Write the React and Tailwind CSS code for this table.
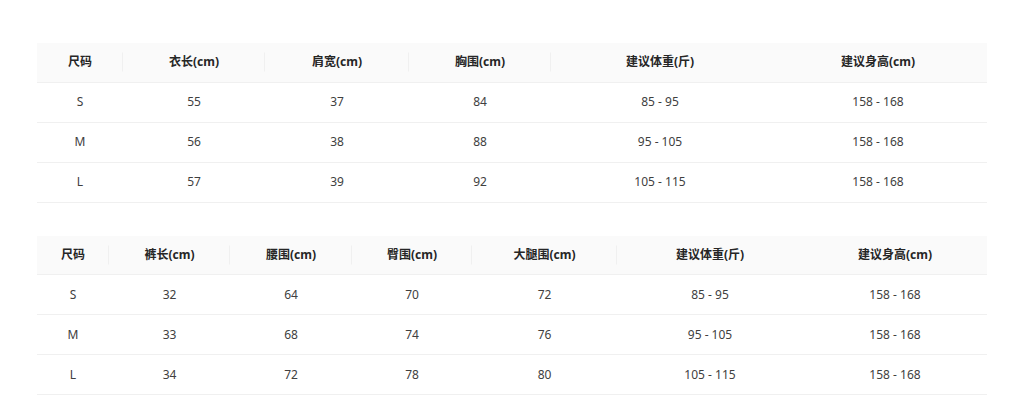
import React from 'react'

const tops = {
  widths: [86, 142, 144, 142, 218, 218],
  head: ['尺码', '衣长(cm)', '肩宽(cm)', '胸围(cm)', '建议体重(斤)', '建议身高(cm)'],
  rows: [
    ['S', '55', '37', '84', '85 - 95', '158 - 168'],
    ['M', '56', '38', '88', '95 - 105', '158 - 168'],
    ['L', '57', '39', '92', '105 - 115', '158 - 168'],
  ],
}

const pants = {
  widths: [72, 121, 122, 120, 145, 186, 184],
  head: ['尺码', '裤长(cm)', '腰围(cm)', '臀围(cm)', '大腿围(cm)', '建议体重(斤)', '建议身高(cm)'],
  rows: [
    ['S', '32', '64', '70', '72', '85 - 95', '158 - 168'],
    ['M', '33', '68', '74', '76', '95 - 105', '158 - 168'],
    ['L', '34', '72', '78', '80', '105 - 115', '158 - 168'],
  ],
}

export default function App() {
  return (
    <div
      className="bg-white w-[1024px] h-[405px] overflow-hidden pt-[43px] text-[12px]"
      style={{ fontFamily: '"Noto Sans", "Noto Sans CJK SC", sans-serif' }}
    >
      <div className="w-[950px] mx-auto flex flex-col gap-[33px]">
        <SizeTable data={tops} />
        <SizeTable data={pants} />
      </div>
    </div>
  )
}

function SizeTable({ data }) {
  const last = data.head.length - 2
  return (
    <table className="w-full table-fixed border-collapse">
      <colgroup>
        {data.widths.map((w, i) => (
          <col key={i} style={{ width: w }} />
        ))}
      </colgroup>
      <thead>
        <tr className="bg-[#fafafa] border-b border-[#f0f0f0]">
          {data.head.map((h, i) => (
            <th
              key={h}
              className={`h-[39px] p-0 text-center font-bold text-[#262626] relative ${
                i < last
                  ? "before:content-[''] before:absolute before:right-0 before:top-1/2 before:-translate-y-1/2 before:h-[19px] before:w-px before:bg-[#f0f0f0]"
                  : ''
              }`}
            >
              {h}
            </th>
          ))}
        </tr>
      </thead>
      <tbody>
        {data.rows.map((r) => (
          <tr key={r[0]} className="border-b border-[#f0f0f0]">
            {r.map((c, i) => (
              <td key={i} className="h-[40px] p-0 text-center text-[#404040]">
                {c}
              </td>
            ))}
          </tr>
        ))}
      </tbody>
    </table>
  )
}
